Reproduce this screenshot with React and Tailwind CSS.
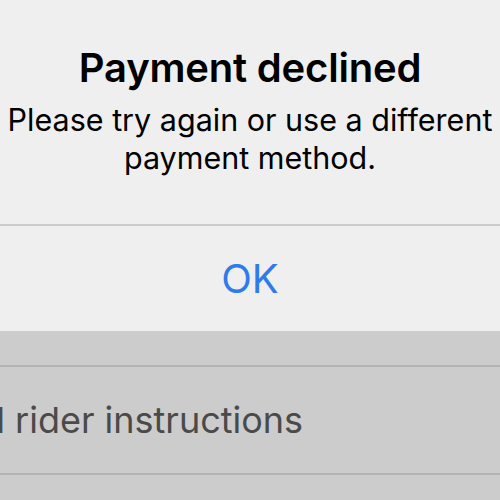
export default function App() {
  return (
    <div
      className="w-[500px] h-[500px] overflow-hidden flex flex-col bg-[#cccccc]"
      style={{ fontFamily: 'Inter, "Noto Sans", sans-serif' }}
    >
      <div className="bg-[#efefef] flex flex-col">
        <div className="h-[224px] flex flex-col items-center pt-[44px]">
          <h1 className="text-[40px] leading-[48px] font-semibold text-black tracking-[-0.2px]">
            Payment declined
          </h1>
          <p className="mt-[9px] text-[30.5px] leading-[38px] text-black text-center whitespace-nowrap">
            Please try again or use a different
            <br />
            payment method.
          </p>
        </div>
        <div className="h-[2px] bg-[#cbcbcb]" />
        <button className="h-[105px] flex items-center justify-center text-[40px] text-[#2f7bea]">
          OK
        </button>
      </div>
      <div className="h-[34px]" />
      <div className="h-[2px] bg-[#b3b3b3]" />
      <div className="h-[106px] flex items-center overflow-hidden">
        <span className="ml-[-64px] whitespace-nowrap text-[36px] text-[#4a4a4a]">
          Add rider instructions
        </span>
      </div>
      <div className="h-[2px] bg-[#b3b3b3]" />
    </div>
  );
}
